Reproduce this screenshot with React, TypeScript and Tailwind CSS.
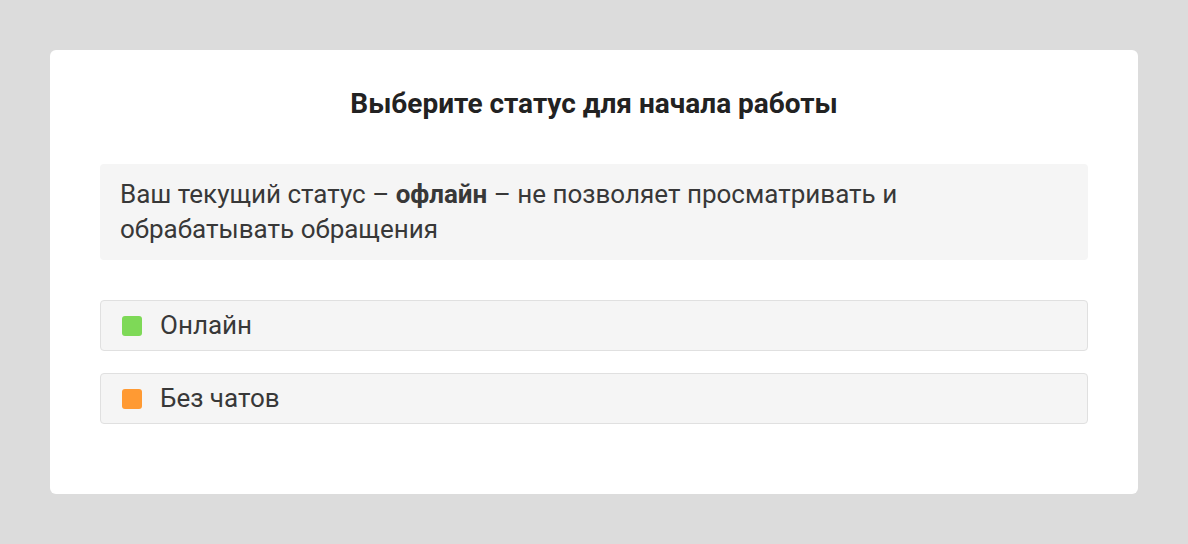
export default function App() {
  return (
    <div
      className="min-h-[544px] bg-[#dcdcdc] px-[50px] pt-[50px] pb-[50px]"
      style={{ fontFamily: "Roboto, 'Noto Sans', sans-serif" }}
    >
      <div className="bg-white rounded-[6px] px-[50px] pt-[38px] pb-[70px]">
        {/* Title */}
        <h1 className="text-center text-[28px] leading-[32px] font-bold text-[#222] mb-[44px]">
          Выберите статус для начала работы
        </h1>

        {/* Info */}
        <div className="bg-[#f5f5f5] rounded-[4px] px-[20px] py-[13px] text-[26px] leading-[35px] text-[#383838]">
          Ваш текущий статус – <b className="font-bold">офлайн</b> – не позволяет просматривать и
          <br />
          обрабатывать обращения
        </div>

        {/* Status options */}
        <div className="mt-[40px] flex flex-col gap-[22px]">
          <button className="h-[51px] flex items-center gap-[18px] px-[21px] bg-[#f5f5f5] border border-[#e0e0e0] rounded-[4px] text-[26px] text-[#383838] text-left">
            <span className="w-[20px] h-[20px] rounded-[3px] bg-[#7ed957]" />
            Онлайн
          </button>
          <button className="h-[51px] flex items-center gap-[18px] px-[21px] bg-[#f5f5f5] border border-[#e0e0e0] rounded-[4px] text-[26px] text-[#383838] text-left">
            <span className="w-[20px] h-[20px] rounded-[3px] bg-[#ff9a33]" />
            Без чатов
          </button>
        </div>
      </div>
    </div>
  );
}
